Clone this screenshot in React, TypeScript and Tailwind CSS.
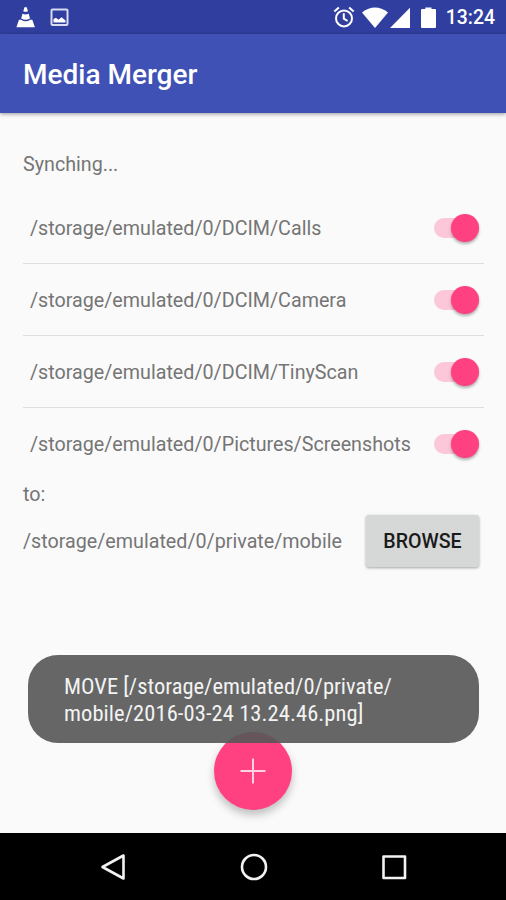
import { useState } from 'react';

const FOLDERS = [
  '/storage/emulated/0/DCIM/Calls',
  '/storage/emulated/0/DCIM/Camera',
  '/storage/emulated/0/DCIM/TinyScan',
  '/storage/emulated/0/Pictures/Screenshots',
];

const pathClass = 'text-[19.7px] leading-6 text-[#757575] whitespace-nowrap';

function StatusBar() {
  return (
    <div className="flex h-[34px] items-center justify-between bg-[#303f9f] pl-4 pr-[11px] text-white">
      <div className="flex items-center gap-[14px]">
        <svg width="20" height="22" viewBox="0 0 20 22" fill="currentColor">
          <path d="M8.4 1.2h2.4l1.1 4a5 5 0 0 1-4.6 0z" />
          <path d="M6.5 7.8q3.1 1.5 6.2 0l1.3 4.6q-4.4 2.6-8.8 0z" />
          <path d="M3 13.8h2q4.6 3 9.3 0h2l2.6 7.4H.4z" />
        </svg>
        <svg width="19" height="19" viewBox="0 0 19 19" className="text-[#d8dcf2]">
          <rect x="1.5" y="1.5" width="16" height="15.5" rx="1" fill="none" stroke="currentColor" strokeWidth="2" />
          <path d="M3.5 14.5v-3.6l2.5-1.2 2.3 2 3.4-2.4 3.8 3.1v2.1z" fill="#fff" />
        </svg>
      </div>
      <div className="flex items-center">
        <svg width="22" height="22" viewBox="0 0 22 22" fill="none" stroke="currentColor" strokeWidth="2">
          <circle cx="11" cy="12.4" r="8" />
          <path d="M10.8 7.2v5.4l3.8 2.4M1.3 5.4l4.6-3.9M20.7 5.4l-4.6-3.9" />
        </svg>
        <svg width="26" height="21" viewBox="0 0 26 21" fill="currentColor" className="ml-[7px]">
          <path d="M0 5.4Q13-4.4 26 5.4L13 21z" />
        </svg>
        <svg width="20" height="21" viewBox="0 0 20 21" fill="currentColor" className="ml-[2px]">
          <path d="M20 0.8v20.2H0z" />
        </svg>
        <svg width="15" height="21" viewBox="0 0 15 21" fill="currentColor" className="ml-[11px]">
          <path d="M4.3 0.5h6.2v1.5H14q1 0 1 1v17q0 1-1 1H1q-1 0-1-1V3q0-1 1-1h3.3z" />
        </svg>
        <span className="ml-[10px] mt-[2px] text-[19.4px] font-medium leading-6">13:24</span>
      </div>
    </div>
  );
}

function Switch({ on, onToggle }: { on: boolean; onToggle: () => void }) {
  return (
    <button
      role="switch"
      aria-checked={on}
      onClick={onToggle}
      className={`flex h-5 w-[45px] items-center rounded-full ${on ? 'justify-end bg-[#fbc7d9]' : 'justify-start bg-[#bdbdbd]'}`}
    >
      <span className={`size-7 rounded-full shadow-[0_2px_3px_rgba(0,0,0,0.3)] ${on ? 'bg-[#ff4081]' : 'bg-[#f1f1f1]'}`} />
    </button>
  );
}

function NavBar() {
  return (
    <div className="flex h-[67px] items-center justify-between bg-black pl-[99px] pr-[98px] text-[#f2f2f2]">
      <svg width="28" height="28" viewBox="0 0 28 28" fill="none" stroke="currentColor" strokeWidth="2.6" strokeLinejoin="round">
        <path d="M24.5 2.5v23L3.5 14z" />
      </svg>
      <svg width="28" height="28" viewBox="0 0 28 28" fill="none" stroke="currentColor" strokeWidth="2.6">
        <circle cx="14" cy="14" r="12" />
      </svg>
      <svg width="28" height="28" viewBox="0 0 28 28" fill="none" stroke="currentColor" strokeWidth="2.6" strokeLinejoin="round">
        <rect x="3.5" y="3.5" width="21.5" height="21.5" />
      </svg>
    </div>
  );
}

export default function App() {
  const [enabled, setEnabled] = useState(FOLDERS.map(() => true));

  function toggle(i: number) { setEnabled(enabled.map((e, idx) => idx === i ? !e : e)); }

  return (
    <div className="relative flex h-[900px] w-[506px] flex-col overflow-hidden bg-[#fafafa] font-[Roboto,sans-serif]">
      <StatusBar />
      <header className="z-10 flex h-[79px] items-center bg-[#3f51b5] pl-[23px] pt-[2px] shadow-[0_1px_4px_rgba(0,0,0,0.4)]">
        <h1 className="text-[28px] font-medium leading-8 text-white">Media Merger</h1>
      </header>

      <main className="flex flex-1 flex-col pl-[23px] pr-[22px] pt-10">
        <p className={pathClass}>Synching...</p>

        <ul className="mt-[15px] divide-y divide-[#dedede]">
          {FOLDERS.map((folder, i) => (
            <li key={folder} className="flex h-[72px] items-center justify-between pl-[7px] pr-[5px]">
              <span className={`pt-[2px] ${pathClass}`}>{folder}</span>
              <Switch on={enabled[i]} onToggle={() => toggle(i)} />
            </li>
          ))}
        </ul>

        <p className={`mt-[3px] ${pathClass}`}>to:</p>

        <div className="mt-2 flex items-center justify-between pr-[5px]">
          <span className={`pt-[2px] ${pathClass}`}>/storage/emulated/0/private/mobile</span>
          <button className="h-[52px] w-[113px] rounded-[3px] bg-[#d6d7d7] pt-[2px] text-[19.6px] font-medium text-[#1a1a1a] shadow-[0_1px_3px_rgba(0,0,0,0.35)]">
            BROWSE
          </button>
        </div>

        <button aria-label="Add" className="mb-[23px] mr-px mt-auto flex size-[78px] items-center justify-center self-center rounded-full bg-[#ff4081] shadow-[0_5px_8px_rgba(0,0,0,0.24)]">
          <svg width="26" height="26" viewBox="0 0 26 26" stroke="#ffd3e1" strokeWidth="2">
            <path d="M13 0.5v25M0.5 13h25" />
          </svg>
        </button>
      </main>

      <NavBar />

      {/* toast */}
      <div className="absolute left-[28px] top-[655px] z-20 flex h-[88px] w-[451px] items-center rounded-[30px] bg-[#575757]/91 pl-9 pt-[2px]">
        <p className="font-['Roboto_Condensed',Roboto,sans-serif] text-[22.5px] leading-[27px] text-[#f3f3f3]">
          MOVE [/storage/emulated/0/private/
          <br />
          <span className="tracking-[0.08px]">mobile/2016-03-24 13.24.46.png]</span>
        </p>
      </div>
    </div>
  );
}
